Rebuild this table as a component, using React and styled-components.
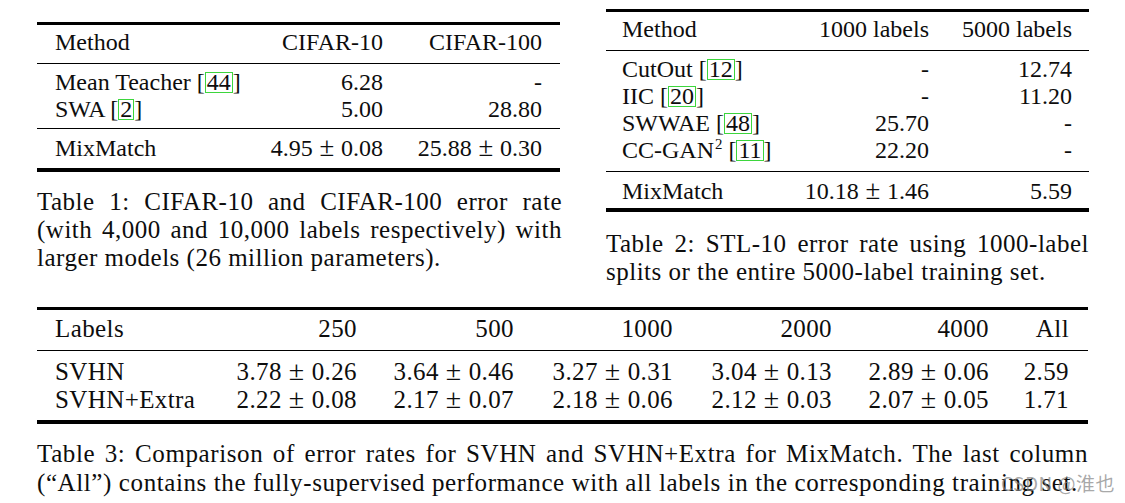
import React from "react";
import styled, { createGlobalStyle } from "styled-components";

const GlobalStyle = createGlobalStyle`
  html, body {
    margin: 0;
    padding: 0;
    background: #ffffff;
  }
  body {
    font-family: "Liberation Serif", "Times New Roman", serif;
    color: #0d0d0d;
  }
`;

const Page = styled.div`
  position: relative;
  width: 1125px;
  height: 503px;
  padding-left: 37px;
  box-sizing: border-box;
  overflow: hidden;
`;

const TopRow = styled.div`
  display: flex;
  align-items: flex-start;
  gap: 44px;
`;

const Block = styled.div`
  width: ${(p) => p.$width}px;
  padding-top: ${(p) => p.$top || 0}px;
`;

const Rule = styled.div`
  height: ${(p) => p.$weight}px;
  background: #000;
`;

const Section = styled.div`
  padding-top: ${(p) => p.$pt}px;
  padding-bottom: ${(p) => p.$pb}px;
`;

const Row = styled.div`
  display: grid;
  grid-template-columns: ${(p) => p.$cols};
  padding: 0 ${(p) => p.$pr}px 0 ${(p) => p.$pl}px;
  height: ${(p) => p.$lh}px;
  line-height: ${(p) => p.$lh}px;
  font-size: ${(p) => p.$size}px;
  letter-spacing: ${(p) => p.$ls || 0}px;
  white-space: nowrap;
`;

const Cell = styled.div`
  text-align: ${(p) => (p.$right ? "right" : "left")};
`;

const Cite = styled.span`
  display: inline-block;
  line-height: 19px;
  padding: 0 1px;
  border: 1px solid #3dd63d;
`;

const Sup = styled.sup`
  font-size: 0.62em;
  line-height: 0;
  vertical-align: 0.6em;
  margin-left: 1px;
`;

const Pm = styled.span`
  margin: 0 0.25em;
  font-size: 1.12em;
  line-height: 0;
`;

const Caption = styled.div`
  margin-top: ${(p) => p.$mt}px;
  font-size: ${(p) => p.$size}px;
  line-height: ${(p) => p.$lh}px;
  letter-spacing: ${(p) => p.$ls || 0}px;
`;

const Line = styled.div`
  white-space: nowrap;
  text-align: ${(p) => (p.$justify ? "justify" : "left")};
  text-align-last: ${(p) => (p.$justify ? "justify" : "left")};
`;

const Watermark = styled.div`
  position: absolute;
  left: 1001px;
  top: 469px;
  font-family: "Noto Sans CJK SC", "Noto Sans", sans-serif;
  font-size: 19px;
  color: rgba(130, 130, 130, 0.7);
  letter-spacing: 0.5px;
`;

const val = (s) => {
  if (!s.includes("±")) return s;
  const [a, b] = s.split("±").map((x) => x.trim());
  return (
    <>
      {a}
      <Pm>±</Pm>
      {b}
    </>
  );
};

const ref = (name, n, sup) => (
  <>
    {name}
    {sup && <Sup>{sup}</Sup>} [<Cite>{n}</Cite>]
  </>
);

const DataTable = ({ spec }) => (
  <div>
    <Rule $weight={3} />
    {spec.sections.map((sec, i) => (
      <React.Fragment key={i}>
        {i > 0 && <Rule $weight={1} />}
        <Section $pt={sec.pt} $pb={sec.pb}>
          {sec.rows.map((row, j) => (
            <Row
              key={j}
              $cols={spec.cols}
              $pl={spec.pl}
              $pr={spec.pr}
              $lh={sec.lh}
              $size={spec.size}
              $ls={spec.ls}
            >
              {row.map((c, k) => (
                <Cell key={k} $right={k > 0}>
                  {typeof c === "string" ? val(c) : c}
                </Cell>
              ))}
            </Row>
          ))}
        </Section>
      </React.Fragment>
    ))}
    <Rule $weight={4} />
  </div>
);

const table1 = {
  cols: "188px 140px 159px",
  pl: 18,
  pr: 18,
  size: 24,
  sections: [
    { pt: 3, pb: 7, lh: 28, rows: [["Method", "CIFAR-10", "CIFAR-100"]] },
    {
      pt: 5,
      pb: 5,
      lh: 27,
      rows: [
        [ref("Mean Teacher", "44"), "6.28", "-"],
        [ref("SWA", "2"), "5.00", "28.80"],
      ],
    },
    { pt: 5, pb: 6, lh: 28, rows: [["MixMatch", "4.95 ± 0.08", "25.88 ± 0.30"]] },
  ],
};

const table2 = {
  cols: "157px 150px 143px",
  pl: 16,
  pr: 17,
  size: 24,
  sections: [
    { pt: 3, pb: 7, lh: 28, rows: [["Method", "1000 labels", "5000 labels"]] },
    {
      pt: 5,
      pb: 7,
      lh: 27,
      rows: [
        [ref("CutOut", "12"), "-", "12.74"],
        [ref("IIC", "20"), "-", "11.20"],
        [ref("SWWAE", "48"), "25.70", "-"],
        [ref("CC-GAN", "11", "2"), "22.20", "-"],
      ],
    },
    { pt: 5, pb: 3, lh: 28, rows: [["MixMatch", "10.18 ± 1.46", "5.59"]] },
  ],
};

const table3 = {
  cols: "165px 137px 157px 159px 159px 157px 80px",
  pl: 18,
  pr: 19,
  size: 25,
  ls: 0.4,
  sections: [
    {
      pt: 5,
      pb: 7,
      lh: 28,
      rows: [["Labels", "250", "500", "1000", "2000", "4000", "All"]],
    },
    {
      pt: 7,
      pb: 6,
      lh: 28,
      rows: [
        ["SVHN", "3.78 ± 0.26", "3.64 ± 0.46", "3.27 ± 0.31", "3.04 ± 0.13", "2.89 ± 0.06", "2.59"],
        ["SVHN+Extra", "2.22 ± 0.08", "2.17 ± 0.07", "2.18 ± 0.06", "2.12 ± 0.03", "2.07 ± 0.05", "1.71"],
      ],
    },
  ],
};

export default function App() {
  return (
    <Page>
      <GlobalStyle />
      <TopRow>
        <Block $width={525} $top={22}>
          <div style={{ width: 523 }}>
            <DataTable spec={table1} />
          </div>
          <Caption $mt={16} $size={25} $lh={28} $ls={0.5}>
            <Line $justify>Table 1: CIFAR-10 and CIFAR-100 error rate</Line>
            <Line $justify>(with 4,000 and 10,000 labels respectively) with</Line>
            <Line>larger models (26 million parameters).</Line>
          </Caption>
        </Block>
        <Block $width={483} $top={9}>
          <DataTable spec={table2} />
          <Caption $mt={18} $size={25} $lh={28} $ls={0.5}>
            <Line $justify>Table 2: STL-10 error rate using 1000-label</Line>
            <Line>splits or the entire 5000-label training set.</Line>
          </Caption>
        </Block>
      </TopRow>
      <Block $width={1051} $top={21}>
        <DataTable spec={table3} />
        <Caption $mt={15} $size={25} $lh={29} $ls={0.6}>
          <Line $justify>
            Table 3: Comparison of error rates for SVHN and SVHN+Extra for MixMatch. The last column
          </Line>
          <Line>(“All”) contains the fully-supervised performance with all labels in the corresponding training set.</Line>
        </Caption>
      </Block>
      <Watermark>CSDN @淮也</Watermark>
    </Page>
  );
}
